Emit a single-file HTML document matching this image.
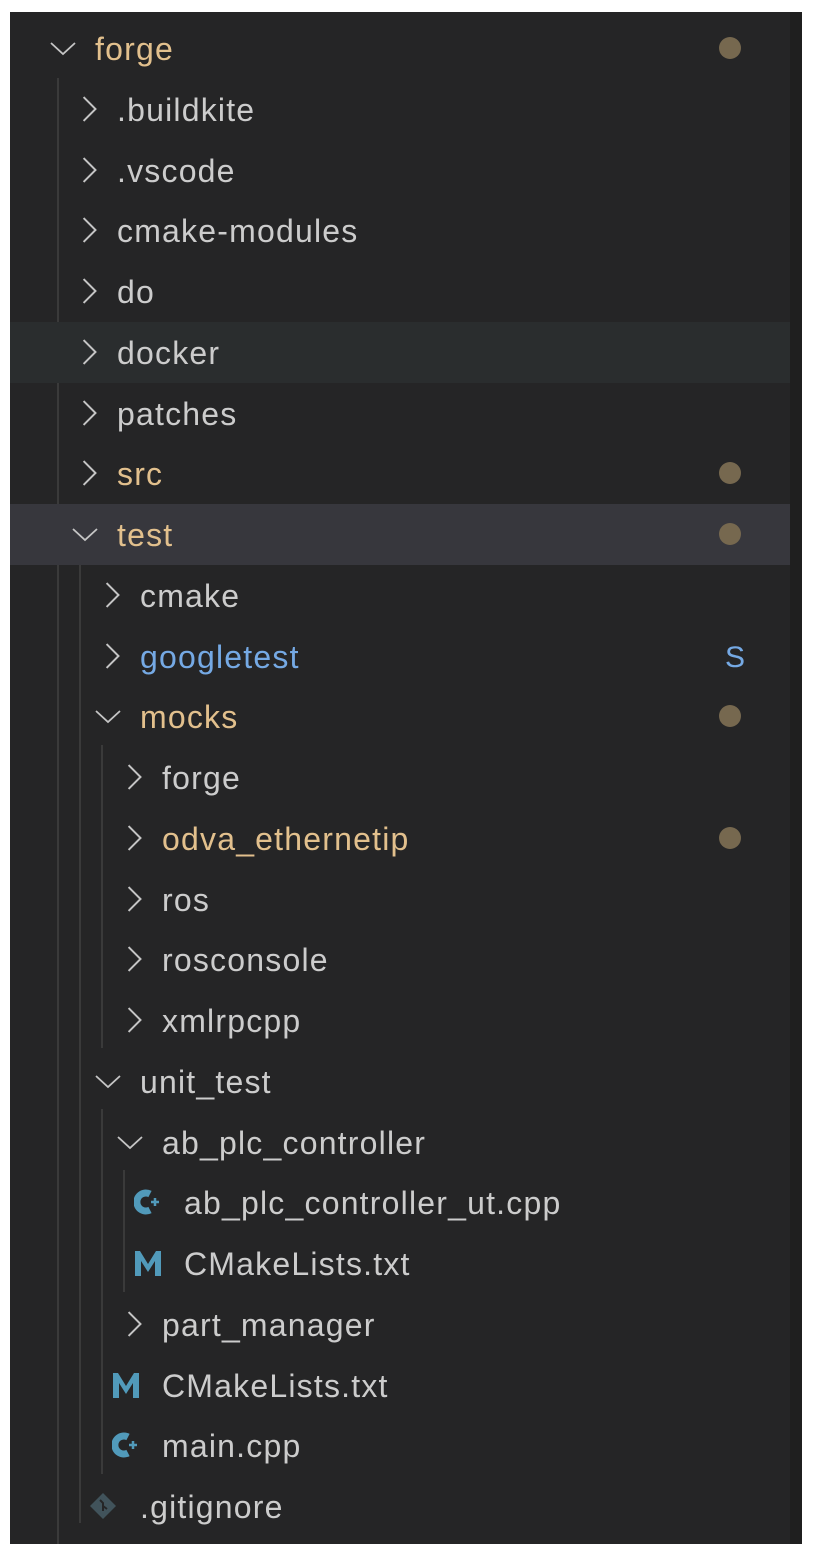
<!DOCTYPE html>
<html><head><meta charset="utf-8"><style>
html,body{margin:0;padding:0;background:#fff;width:816px;height:1556px;overflow:hidden}
#p{position:absolute;left:10px;top:12px;width:792px;height:1532px;background:#252526;overflow:hidden}
#sb{position:absolute;left:780px;top:0;width:12px;height:1532px;background:#1f1f1f}
.r{position:absolute;left:0;width:780px;height:61px;font-family:"Liberation Sans",sans-serif;font-size:32px;letter-spacing:1.2px;line-height:63px;color:#cccccc;white-space:nowrap}
.t{position:absolute;top:0}
.o{color:#e2c08d}.b{color:#75a9e4}
.ch{position:absolute;top:19px;width:22px;height:22px}
.dot{position:absolute;left:709px;top:19px;width:22px;height:22px;border-radius:50%;background:#76684f}
.S{position:absolute;left:715px;top:0;color:#75a9e4;font-size:30px}
.g{position:absolute;width:2px;background:#3a3a3a}
.ic{position:absolute;top:15px}
</style></head><body><div id="p">
<div class="g" style="left:47px;top:66px;height:1466px"></div>
<div class="g" style="left:69px;top:551px;height:960px"></div>
<div class="g" style="left:91px;top:733px;height:303px"></div>
<div class="g" style="left:91px;top:1097px;height:365px"></div>
<div class="g" style="left:113px;top:1158px;height:122px"></div>
<div id="sb"></div>
<div id="rows"></div>
</div>
<script>
const R=[
[0,'forge','open','o','dot'],
[1,'.buildkite','c'],[1,'.vscode','c'],[1,'cmake-modules','c'],[1,'do','c'],[1,'docker','c','','','#2a2d2e'],[1,'patches','c'],
[1,'src','c','o','dot'],[1,'test','open','o','dot','#37373d'],
[2,'cmake','c'],[2,'googletest','c','b','S'],[2,'mocks','open','o','dot'],
[3,'forge','c'],[3,'odva_ethernetip','c','o','dot'],[3,'ros','c'],[3,'rosconsole','c'],[3,'xmlrpcpp','c'],
[2,'unit_test','open'],[3,'ab_plc_controller','open'],
[4,'ab_plc_controller_ut.cpp','C'],[4,'CMakeLists.txt','M'],
[3,'part_manager','c'],[3,'CMakeLists.txt','M'],[3,'main.cpp','C'],[2,'.gitignore','G']];
const X=[85,107,130,152,174];
let h='';
R.forEach((r,i)=>{
 const top=6+i*60.75;const tx=X[r[0]];
 h+=`<div class="r" style="top:${top}px;${r[5]?'background:'+r[5]:''}">`;
 if(r[2]=='c') h+=`<svg class="ch" style="left:${tx-40}px;top:17px;width:24px;height:26px" viewBox="0 0 22 24"><path d="M6 1 L17 12 L6 23" fill="none" stroke="#c5c5c5" stroke-width="1.8"/></svg>`;
 if(r[2]=='open') h+=`<svg class="ch" style="left:${tx-46}px;top:20px;width:28px;height:20px" viewBox="0 0 28 20"><path d="M2 5 L14 16 L26 5" fill="none" stroke="#c5c5c5" stroke-width="1.8"/></svg>`;
 if(r[2]=='C') h+=`<svg class="ic" style="left:${tx-50}px" width="28" height="30" viewBox="0 0 28 30"><path d="M16 7 A9 9 0 1 0 16 23" fill="none" stroke="#519aba" stroke-width="7"/><path d="M17 15h8M21 11v8" stroke="#519aba" stroke-width="2.5"/></svg>`;
 if(r[2]=='M') h+=`<svg class="ic" style="left:${tx-52}px" width="32" height="30" viewBox="0 0 32 30"><path d="M3 28V3h5l8 13 8-13h5v25h-6V13l-7 11-7-11v15z" fill="#519aba"/></svg>`;
 if(r[2]=='G') h+=`<svg class="ic" style="left:${tx-52}px" width="30" height="30" viewBox="0 0 30 30"><path d="M15 2L28 15 15 28 2 15z" fill="#41535b"/><path d="M12 9l3 3v8M15 15l4 3" stroke="#252526" stroke-width="2" fill="none"/></svg>`;
 h+=`<span class="t ${r[3]||''}" style="left:${tx}px">${r[1]}</span>`;
 if(r[4]=='dot') h+='<div class="dot"></div>';
 if(r[4]=='S') h+='<span class="S">S</span>';
 h+='</div>';
});
document.getElementById('rows').innerHTML=h;
</script>
</body></html>
